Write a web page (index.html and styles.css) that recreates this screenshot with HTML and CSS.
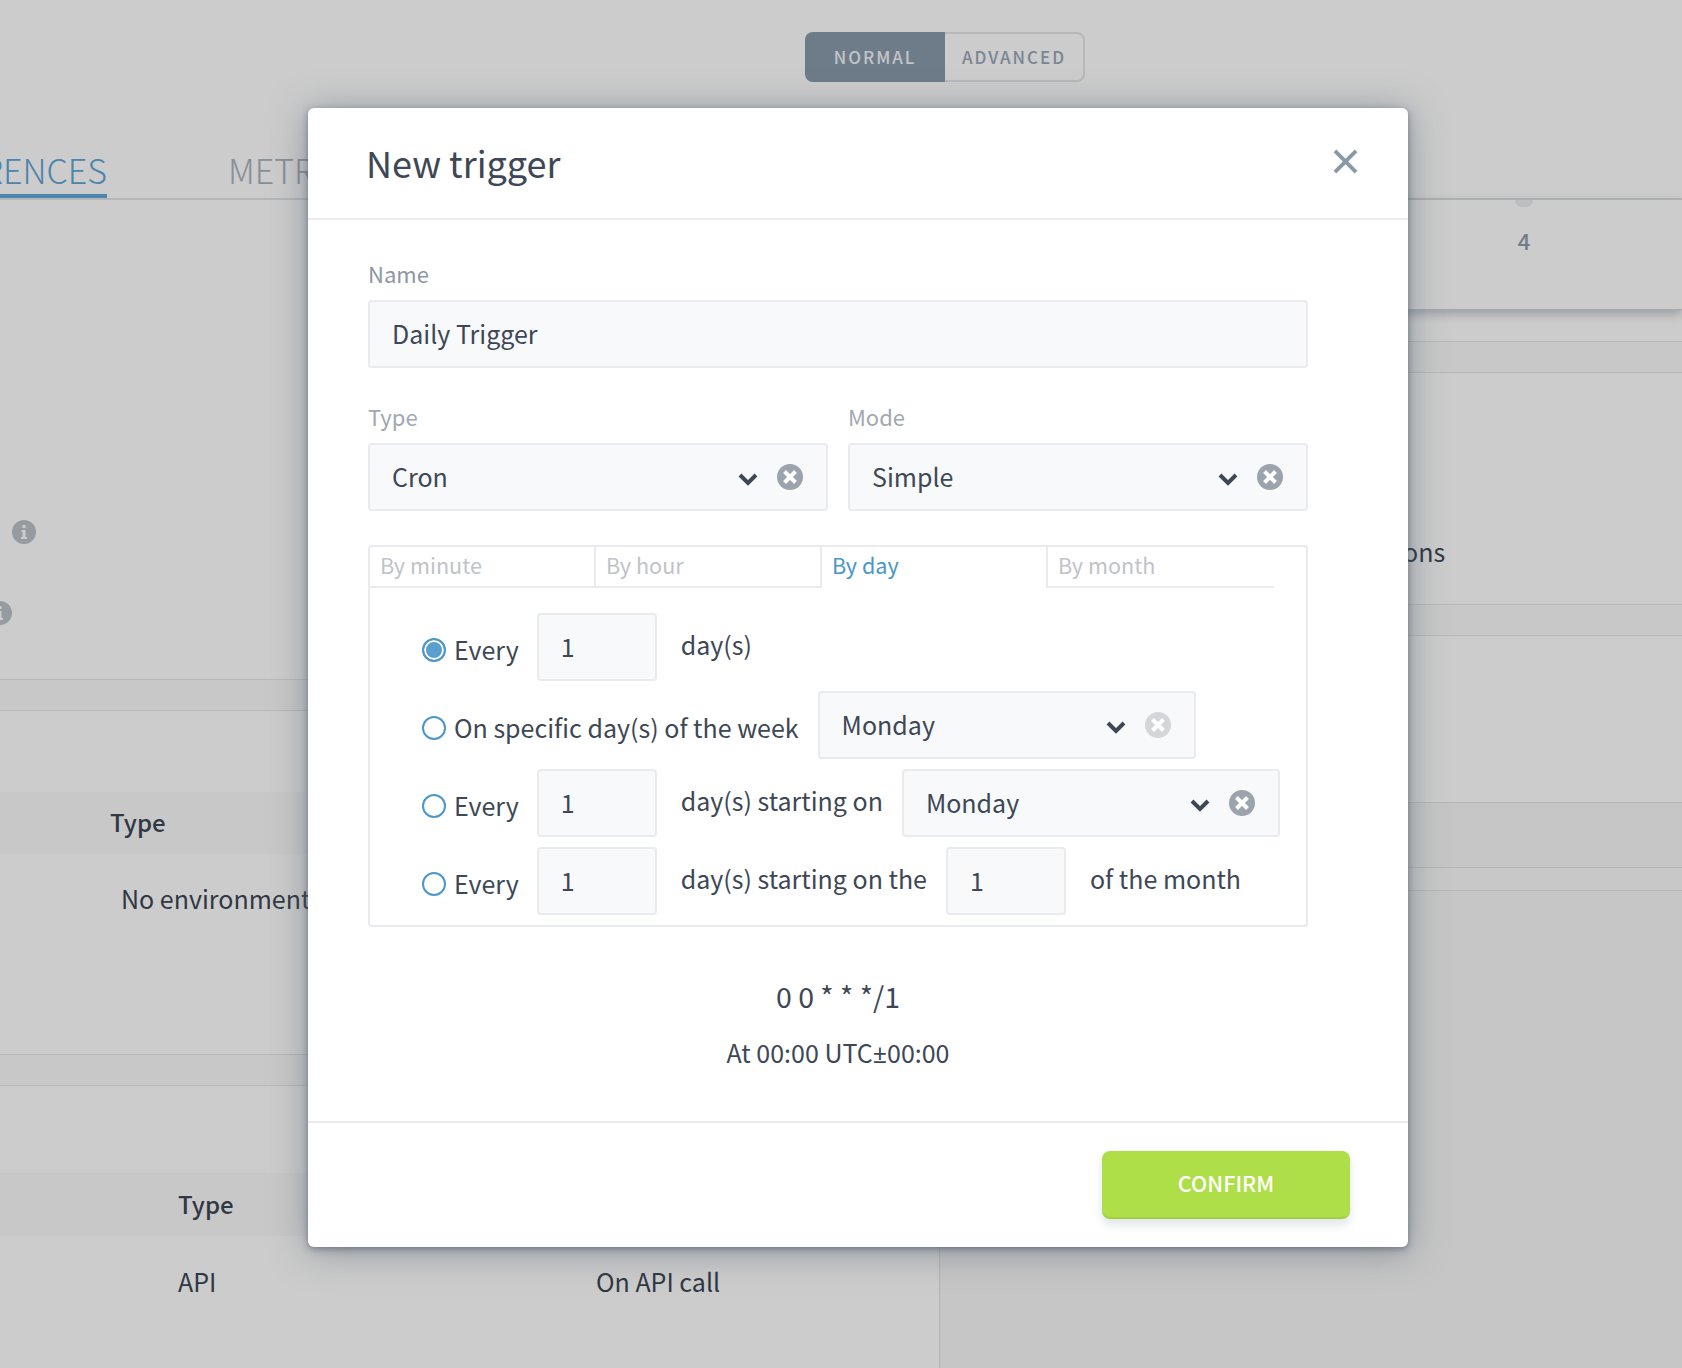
FILE: index.html
```html
<!DOCTYPE html>
<html>
<head>
  <meta charset="utf-8">
  <title>New trigger</title>
  <link rel="stylesheet" href="styles.css">
</head>
<body>
  <svg class="defs" width="0" height="0">
    <symbol id="chevron" viewBox="0 0 20 14">
      <path d="M2 3l8 8 8-8" fill="none" stroke="currentColor" stroke-width="4"/>
    </symbol>
    <symbol id="clear" viewBox="0 0 26 26">
      <circle cx="13" cy="13" r="13" fill="currentColor"/>
      <path d="M7.5 7.5l11 11M18.500 7.500l-11 11" stroke="#fff" stroke-width="4"/>
    </symbol>
    <symbol id="info" viewBox="0 0 24 24">
      <circle cx="12" cy="12" r="12" fill="currentColor"/>
      <path d="M9.500 10h4v7h1.500v2H9v-2h1.500v-5h-1zM10.500 5h3v3h-3z" fill="#fff"/>
    </symbol>
  </svg>

  <div class="page">
    <div class="mode-row">
      <div class="mode-toggle">
        <span class="mode-btn active">NORMAL</span>
        <span class="mode-btn">ADVANCED</span>
      </div>
    </div>
    <div class="page-tabs">
      <div class="page-tab-clip"><span class="page-tab active">PREFERENCES</span></div>
      <span class="page-tab">METRICS</span>
    </div>
    <div class="columns">
      <div class="col-left">
        <div class="sect sect-info">
          <svg class="info-icon"><use href="#info"/></svg>
          <svg class="info-icon second"><use href="#info"/></svg>
        </div>
        <div class="sect-gap"></div>
        <div class="sect sect-env">
          <div class="table-head env-head">Type</div>
          <div class="table-cell env-cell">No environment</div>
        </div>
        <div class="sect-gap"></div>
        <div class="sect sect-api">
          <div class="table-head api-head">Type</div>
          <div class="table-cell api-cell"><span class="api-type">API</span><span>On API call</span></div>
        </div>
      </div>
      <div class="col-right">
        <div class="stat-card">
          <div class="stat-dot"></div>
          <div class="stat-num">4</div>
        </div>
        <div class="sect-gap"></div>
        <div class="right-block"><span class="right-text">Conditions</span></div>
        <div class="sect-gap"></div>
        <div class="right-empty"></div>
        <div class="right-head"></div>
        <div class="right-strip"></div>
        <div class="right-rest"></div>
      </div>
    </div>
  </div>

  <div class="backdrop"></div>

  <div class="modal">
    <div class="modal-header">
      <h2 class="modal-title">New trigger</h2>
      <svg class="modal-close" viewBox="0 0 26 26"><path d="M2 2l22 22M24 2L2 24" fill="none" stroke="currentColor" stroke-width="4"/></svg>
    </div>

    <div class="modal-body">
      <div class="field-label">Name</div>
      <input class="text-input" type="text" value="Daily Trigger">

      <div class="field-pair">
        <div class="field-half">
          <div class="field-label faint">Type</div>
          <div class="select">
            <span class="select-value">Cron</span>
            <svg class="select-chevron"><use href="#chevron"/></svg>
            <svg class="select-clear"><use href="#clear"/></svg>
          </div>
        </div>
        <div class="field-half">
          <div class="field-label faint">Mode</div>
          <div class="select">
            <span class="select-value">Simple</span>
            <svg class="select-chevron"><use href="#chevron"/></svg>
            <svg class="select-clear"><use href="#clear"/></svg>
          </div>
        </div>
      </div>

      <div class="cron-box">
        <div class="cron-tabs">
          <div class="cron-tab">By minute</div>
          <div class="cron-tab">By hour</div>
          <div class="cron-tab active">By day</div>
          <div class="cron-tab last">By month</div>
        </div>
        <div class="cron-rows">
          <div class="cron-row">
            <div class="radio-label"><span class="radio checked"></span>Every</div>
            <input class="num-input" type="text" value="1">
            <span class="row-text">day(s)</span>
          </div>
          <div class="cron-row">
            <div class="radio-label week-label"><span class="radio"></span>On specific day(s) of the week</div>
            <div class="select wide">
              <span class="select-value">Monday</span>
              <svg class="select-chevron"><use href="#chevron"/></svg>
              <svg class="select-clear disabled"><use href="#clear"/></svg>
            </div>
          </div>
          <div class="cron-row">
            <div class="radio-label"><span class="radio"></span>Every</div>
            <input class="num-input" type="text" value="1">
            <span class="row-text">day(s) starting on</span>
            <div class="select wide">
              <span class="select-value">Monday</span>
              <svg class="select-chevron"><use href="#chevron"/></svg>
              <svg class="select-clear"><use href="#clear"/></svg>
            </div>
          </div>
          <div class="cron-row">
            <div class="radio-label"><span class="radio"></span>Every</div>
            <input class="num-input" type="text" value="1">
            <span class="row-text">day(s) starting on the</span>
            <input class="num-input" type="text" value="1">
            <span class="row-text">of the month</span>
          </div>
        </div>
      </div>

      <div class="cron-expr">0 0 * * */1</div>
      <div class="cron-desc">At 00:00 UTC<span class="plusminus">±</span>00:00</div>
    </div>

    <div class="modal-footer">
      <button class="btn-confirm">CONFIRM</button>
    </div>
  </div>
</body>
</html>
```

FILE: styles.css
```css
* { box-sizing: border-box; }
html, body { margin: 0; padding: 0; }
body {
  font-family: "Noto Sans CJK SC", "Noto Sans", sans-serif;
  color: #3d4756;
  background: #fff;
  width: 1682px;
  height: 1368px;
  overflow: hidden;
  position: relative;
}
.defs { position: absolute; }

/* page behind the dialog */
.page { height: 1368px; overflow: hidden; }
.mode-row { padding: 32px 0 0 805px; height: 82px; }
.mode-toggle {
  display: flex;
  width: 280px;
  height: 50px;
  border: 2px solid #e4e6e9;
  border-radius: 8px;
}
.mode-btn {
  flex: 1;
  display: flex;
  align-items: center;
  justify-content: center;
  padding-bottom: 2px;
  font-size: 17px;
  font-weight: 500;
  letter-spacing: 2px;
  color: #98a8b8;
}
.mode-btn.active {
  flex: 0 0 140px;
  margin: -2px 0 -2px -2px;
  background: #8a9bad;
  color: #f4f6f8;
  border-radius: 8px 0 0 8px;
}
.page-tabs {
  display: flex;
  align-items: flex-end;
  height: 118px;
  border-bottom: 2px solid #e2e4e7;
}
.page-tab-clip {
  width: 107px;
  display: flex;
  justify-content: flex-end;
  white-space: nowrap;
}
.page-tab {
  font-size: 34px;
  font-weight: 300;
  line-height: 44px;
  padding-bottom: 6px;
  color: #a8b4c0;
  margin-left: 121px;
}
.page-tab.active {
  margin-left: 0;
  color: #5ea6d8;
  border-bottom: 4px solid #5ea6d8;
  padding-bottom: 2px;
}

.columns { display: grid; grid-template-columns: 939px 1fr; height: 1168px; }
.sect-gap {
  height: 32px;
  background: #fbfbfb;
  border-top: 1px solid #e6e6e6;
  border-bottom: 1px solid #e6e6e6;
}
.sect-info { height: 479px; padding-top: 320px; display: flex; flex-direction: column; gap: 57px; }
.info-icon { width: 24px; height: 24px; margin-left: 12px; color: #bcc2c9; display: block; }
.info-icon.second { margin-left: -12px; }
.sect-env { height: 343px; padding-top: 81px; }
.sect-api { padding-top: 87px; }
.table-head {
  height: 62px;
  padding-bottom: 4px;
  background: #fafafa;
  display: flex;
  align-items: center;
  font-size: 24px;
  font-weight: 500;
}
.api-head { height: 63px; padding: 0 0 2px 178px; }
.env-head { padding-left: 110px; }
.table-cell { font-size: 25px; line-height: 36px; }
.env-cell { padding: 26px 0 0 121px; }
.api-cell { padding: 27px 0 0 178px; display: flex; }
.api-type { width: 418px; }

.col-right { border-left: 1px solid #e0e0e0; display: flex; flex-direction: column; height: 100%; }
.stat-card { height: 110px; flex: none; box-shadow: 0 4px 10px rgba(70, 85, 100, .35); border-bottom: 1px solid #d0d4d8; display: flex; flex-direction: column; align-items: center; padding-left: 426px; margin-bottom: 31px; }
.stat-dot { width: 18px; height: 7px; background: #eceef0; border-radius: 0 0 9px 9px; }
.stat-num { font-size: 22px; font-weight: 500; color: #8d9cac; line-height: 30px; margin-top: 18px; }
.right-block { height: 231px; padding: 160px 0 0 378px; font-size: 25px; line-height: 36px; }
.right-empty { height: 166px; }
.right-head { height: 66px; background: #f8f8f8; border-top: 1px solid #e4e4e4; border-bottom: 1px solid #e4e4e4; }
.right-strip { height: 23px; background: #fbfbfb; border-bottom: 1px solid #e4e4e4; }
.right-rest { flex: 1; background: #f8f8f8; }

.backdrop {
  position: absolute;
  inset: 0;
  background: rgba(0, 0, 0, .2);
}

/* dialog */
.modal {
  position: absolute;
  left: 308px;
  top: 108px;
  width: 1100px;
  height: 1139px;
  background: #fff;
  border-radius: 6px;
  display: flex;
  flex-direction: column;
  box-shadow: 0 2px 6px rgba(75, 88, 105, .6), 0 4px 36px rgba(75, 88, 105, .5);
}
.modal-header {
  height: 112px;
  flex: none;
  border-bottom: 2px solid #eaebef;
  display: flex;
  align-items: center;
  justify-content: space-between;
  padding: 0 50px 0 58px;
}
.modal-title { margin: 0 0 2px; font-size: 36px; font-weight: 400; line-height: 50px; }
.modal-close { width: 25px; height: 25px; color: #8a99a6; margin-bottom: 4px; }

.modal-body { flex: 1; padding: 40px 100px 0 60px; }
.field-label { font-size: 22px; line-height: 26px; color: #8d97a3; margin-bottom: 14px; }
.field-label.faint { color: #a0a8b2; }
.text-input {
  display: block;
  width: 100%;
  height: 68px;
  padding: 0 22px 2px;
  border: 2px solid #eaebef;
  border-radius: 4px;
  background: #f8f9fb;
  font: 400 25px "Noto Sans CJK SC", "Noto Sans", sans-serif;
  color: #3d4756;
  outline: none;
}
.field-pair { display: flex; gap: 20px; margin-top: 35px; }
.field-half { flex: 1; }

.select {
  display: flex;
  align-items: center;
  height: 68px;
  padding: 0 23px 0 22px;
  border: 2px solid #eaebef;
  border-radius: 4px;
  background: #f8f9fb;
  font-size: 25px;
}
.select.wide { width: 378px; }
.select-value { flex: 1; padding-bottom: 2px; }
.select-chevron { width: 20px; height: 14px; margin: 4px 19px 0 0; color: #3d4756; }
.select-clear { width: 26px; height: 26px; color: #9ba3ac; }
.select-clear.disabled { color: #d4d6d9; }

.cron-box {
  height: 382px;
  margin-top: 34px;
  border: 2px solid #eaebef;
  border-radius: 4px;
}
.cron-tabs { display: flex; }
.cron-tab {
  width: 226px;
  height: 41px;
  padding-left: 10px;
  font-size: 21.600px;
  line-height: 36px;
  color: #c0c3c7;
  border-right: 2px solid #eaebef;
  border-bottom: 2px solid #eaebef;
}
.cron-tab.active { color: #4a96c8; border-bottom: 0; }
.cron-tab.last { border-right: 0; }
.cron-rows { padding: 25px 0 0 52px; display: flex; flex-direction: column; gap: 10px; }
.cron-row { display: flex; align-items: center; height: 68px; font-size: 25px; }
.radio-label { display: flex; align-items: center; gap: 8px; margin-right: 18px; padding-top: 4px; }
.week-label { margin-right: 19px; }
.radio {
  width: 24px;
  height: 24px;
  margin-top: 2px;
  border: 2px solid #4b97c9;
  border-radius: 50%;
  background: #fff;
  flex: none;
}
.radio.checked { background: #5b9fce; box-shadow: inset 0 0 0 2px #fff; }
.num-input {
  width: 120px;
  height: 68px;
  padding: 0 22px 2px;
  border: 2px solid #eaebef;
  border-radius: 4px;
  background: #f8f9fb;
  font: 400 25px "Noto Sans CJK SC", "Noto Sans", sans-serif;
  color: #3d4756;
  outline: none;
}
.row-text { margin: 0 19px 0 24px; padding-bottom: 6px; }

.cron-expr { margin-top: 49px; text-align: center; font-size: 28.500px; line-height: 40px; }
.cron-desc { margin-top: 18px; text-align: center; font-size: 25px; line-height: 36px; }
.plusminus { font-family: "Noto Sans", sans-serif; }

.modal-footer {
  flex: none;
  height: 126px;
  border-top: 2px solid #eaebef;
  display: flex;
  justify-content: flex-end;
  align-items: center;
  padding: 0 58px;
}
.btn-confirm {
  width: 248px;
  height: 68px;
  padding: 0 0 3px;
  border: 0;
  border-bottom: 2px solid #a0d040;
  border-radius: 8px;
  background: #aede48;
  color: #fff;
  font: 500 21.600px "Noto Sans CJK SC", "Noto Sans", sans-serif;
  box-shadow: 0 6px 10px rgba(110, 120, 140, .2);
}
```
